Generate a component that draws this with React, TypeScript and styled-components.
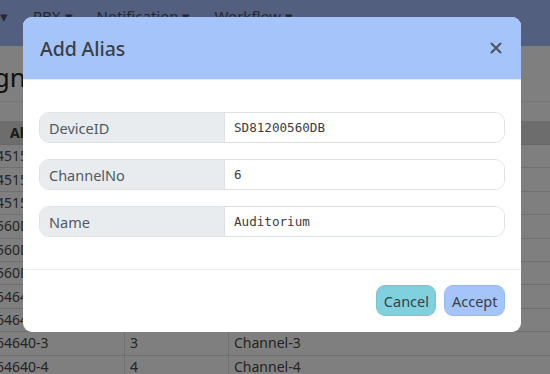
import React from 'react';
import styled, { createGlobalStyle } from 'styled-components';

const GlobalStyle = createGlobalStyle`
  html, body {
    margin: 0;
    padding: 0;
    background: #ffffff;
    font-family: "Noto Sans", "Open Sans", sans-serif;
    overflow: hidden;
  }
`;

interface AliasRow {
  alias: string;
  channel: string;
  name: string;
}

const rows: Array<AliasRow> = [
  { alias: 'SD812004515A-1', channel: '1', name: 'Channel-1' },
  { alias: 'SD812004515A-2', channel: '2', name: 'Channel-2' },
  { alias: 'SD812004515A-3', channel: '3', name: 'Channel-3' },
  { alias: 'SD81200560DB-1', channel: '1', name: 'Channel-1' },
  { alias: 'SD81200560DB-2', channel: '2', name: 'Channel-2' },
  { alias: 'SD81200560DB-3', channel: '3', name: 'Channel-3' },
  { alias: 'SD8120064640-1', channel: '1', name: 'Channel-1' },
  { alias: 'SD8120064640-2', channel: '2', name: 'Channel-2' },
  { alias: 'SD8120064640-3', channel: '3', name: 'Channel-3' },
  { alias: 'SD8120064640-4', channel: '4', name: 'Channel-4' },
];

const fields = [
  { label: 'DeviceID', value: 'SD81200560DB' },
  { label: 'ChannelNo', value: '6' },
  { label: 'Name', value: 'Auditorium' },
];

const App = (): JSX.Element => (
  <>
    <GlobalStyle />
    <Page>
      <Navbar>
        <NavItem>▾</NavItem>
        <NavItem>PBX ▾</NavItem>
        <NavItem>Notification ▾</NavItem>
        <NavItem>Workflow ▾</NavItem>
      </Navbar>
      <Content>
        <PageTitle>Design</PageTitle>
        <Toolbar />
        <AliasTable>
          <colgroup>
            <col style={{ width: 195 }} />
            <col style={{ width: 104 }} />
            <col />
          </colgroup>
          <thead>
            <tr>
              <HeadCell first>Alias</HeadCell>
              <HeadCell>Channel</HeadCell>
              <HeadCell>Name</HeadCell>
            </tr>
          </thead>
          <tbody>
            {rows.map((row) => (
              <tr key={row.alias}>
                <Cell first>{row.alias}</Cell>
                <Cell>{row.channel}</Cell>
                <Cell>{row.name}</Cell>
              </tr>
            ))}
          </tbody>
        </AliasTable>
      </Content>
    </Page>
    <Backdrop />
    <Modal>
      <ModalHeader>
        <ModalTitle>Add Alias</ModalTitle>
        <CloseButton aria-label="Close">
          <svg width="12" height="12" viewBox="0 0 12 12">
            <path d="M1.5 1.5 L10.5 10.5 M10.5 1.5 L1.5 10.5" stroke="#4d5560" strokeWidth="2.1" strokeLinecap="round" />
          </svg>
        </CloseButton>
      </ModalHeader>
      <ModalBody>
        {fields.map((field) => (
          <InputGroup key={field.label}>
            <GroupLabel>{field.label}</GroupLabel>
            <GroupInput readOnly value={field.value} />
          </InputGroup>
        ))}
      </ModalBody>
      <ModalFooter>
        <ActionButton variant="cancel">Cancel</ActionButton>
        <ActionButton variant="accept">Accept</ActionButton>
      </ModalFooter>
    </Modal>
  </>
);

const Page = styled.div`
  width: 550px;
  height: 374px;
  overflow: hidden;
`;

const Navbar = styled.nav`
  display: flex;
  align-items: flex-start;
  gap: 24px;
  height: 46px;
  padding: 5px 0 0 0;
  box-sizing: border-box;
  background: #a5befe;
`;

const NavItem = styled.span`
  font-size: 15px;
  line-height: 22px;
  color: #4a4f60;
  white-space: nowrap;

  &:first-child {
    margin-right: 1px;
  }
`;

const Content = styled.div`
  margin-left: -71px;
`;

const PageTitle = styled.h2`
  margin: 0;
  padding: 15px 0 0 12px;
  height: 55px;
  box-sizing: border-box;
  font-size: 26px;
  font-weight: 400;
  line-height: 32px;
  color: #222;
`;

const Toolbar = styled.div`
  height: 20px;
  border-top: 1px solid #eeeeee;
  box-sizing: border-box;
`;

const AliasTable = styled.table`
  border-collapse: collapse;
  table-layout: fixed;
  width: 700px;
  font-size: 14px;
  color: #4a4a4a;
`;

const HeadCell = styled.th<{ first?: boolean }>`
  background: #dadada;
  height: 23px;
  padding: 0 5px;
  font-weight: 700;
  text-align: left;
  padding-left: ${({ first }) => (first ? '80px' : '5px')};
  border-left: 1px solid #e2e2e2;
  border-bottom: 1px solid #d0d0d0;
  color: #333;
`;

const Cell = styled.td<{ first?: boolean }>`
  height: 22.4px;
  padding: 0 4px 0 ${({ first }) => (first ? '8px' : '5px')};
  border-bottom: 1px solid #e0e0e0;
  border-left: 1px solid #e0e0e0;
  white-space: nowrap;
  overflow: hidden;
  line-height: 22px;
`;

const Backdrop = styled.div`
  position: fixed;
  inset: 0;
  background: rgba(0, 0, 0, 0.5);
`;

const Modal = styled.div`
  position: fixed;
  top: 17px;
  left: 23px;
  width: 498px;
  display: flex;
  flex-direction: column;
  background: #fff;
  border-radius: 9px;
  overflow: hidden;
`;

const ModalHeader = styled.div`
  display: flex;
  align-items: center;
  justify-content: space-between;
  height: 63px;
  padding: 0 19px 0 17px;
  box-sizing: border-box;
  background: #a5c4f9;
  border-bottom: 1px solid #e6ecf5;
`;

const ModalTitle = styled.h5`
  margin: 0;
  font-size: 19.5px;
  font-weight: 500;
  color: #3b3f46;
  letter-spacing: -0.1px;
`;

const CloseButton = styled.button`
  display: flex;
  padding: 0;
  border: 0;
  background: transparent;
  cursor: pointer;
`;

const ModalBody = styled.div`
  display: flex;
  flex-direction: column;
  gap: 16px;
  padding: 32px 16px 32px;
`;

const InputGroup = styled.div`
  display: flex;
  height: 31px;
  border: 1px solid #dee2e6;
  border-radius: 10px;
  overflow: hidden;
  box-sizing: border-box;
`;

const GroupLabel = styled.span`
  display: flex;
  align-items: center;
  width: 185px;
  padding-left: 9px;
  box-sizing: border-box;
  background: #e9ecef;
  border-right: 1px solid #dee2e6;
  font-size: 14.5px;
  color: #4f5963;
`;

const GroupInput = styled.input`
  flex: 1;
  border: 0;
  outline: none;
  padding: 0 9px;
  font-family: "DejaVu Sans Mono", "Liberation Mono", monospace;
  font-size: 12.6px;
  color: #3c3c3c;
  background: #fff;
`;

const ModalFooter = styled.div`
  display: flex;
  justify-content: flex-end;
  gap: 8px;
  padding: 15px 16px 16px;
  border-top: 1px solid #eeeeee;
`;

const ActionButton = styled.button<{ variant: 'cancel' | 'accept' }>`
  height: 31px;
  padding: 0 6.5px;
  border-radius: 9px;
  font-family: "Noto Sans", "Open Sans", sans-serif;
  font-size: 14.5px;
  color: #3a3f46;
  cursor: pointer;
  background: ${({ variant }) => (variant === 'cancel' ? '#80d1dd' : '#a5c4f9')};
  border: 1px solid ${({ variant }) => (variant === 'cancel' ? '#74c6d2' : '#98b8f0')};
`;

export default App;
